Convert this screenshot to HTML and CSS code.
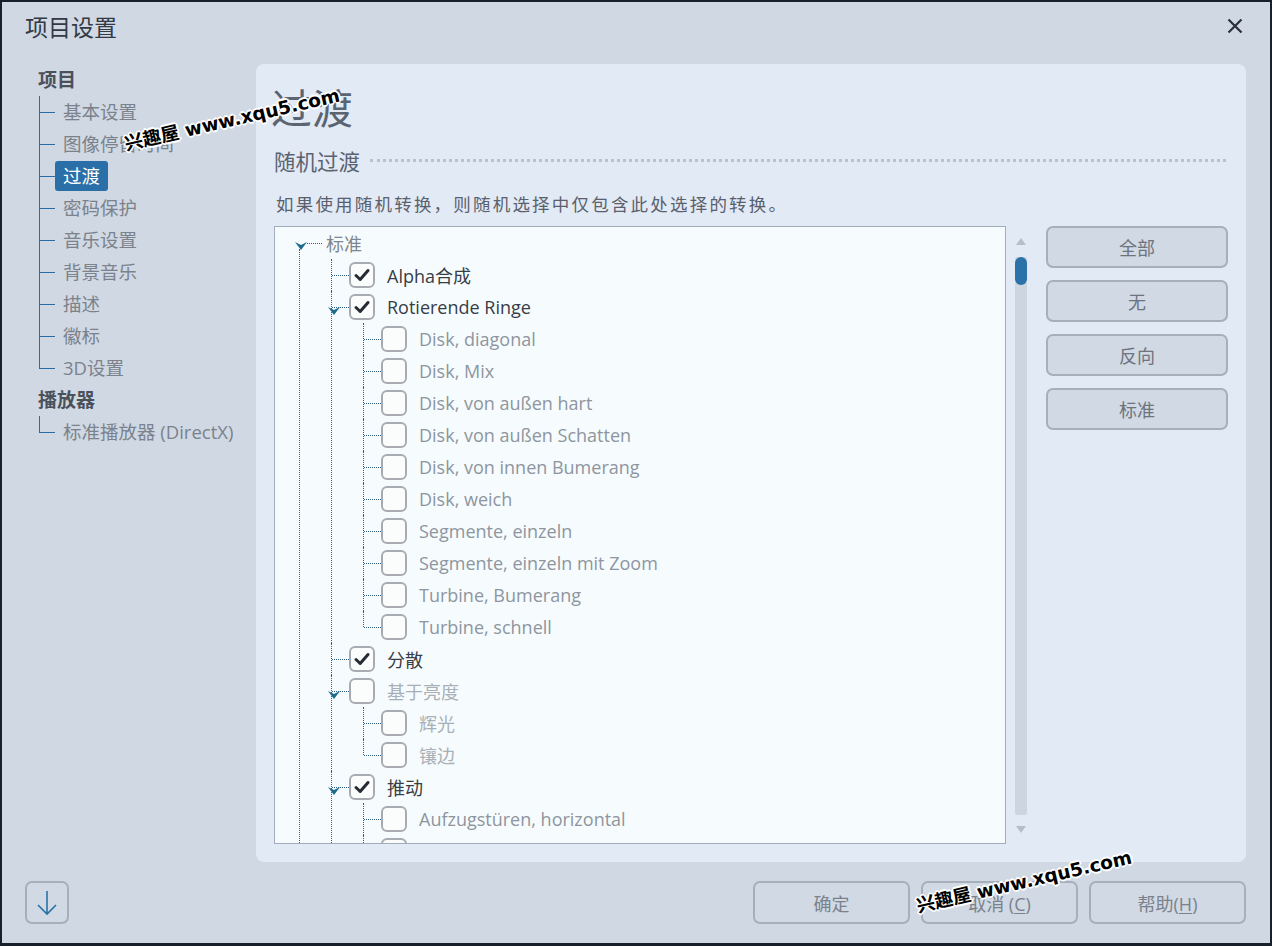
FILE: index.html
```html
<!DOCTYPE html>
<html lang="zh">
<head>
<meta charset="utf-8">
<title>项目设置</title>
<link rel="stylesheet" href="styles.css">
</head>
<body>
<div class="dialog">
  <header class="titlebar">
    <h1 class="title">项目设置</h1>
    <svg class="close" width="16" height="16" viewBox="0 0 16 16"><path d="M1.5 1.5 L14.5 14.5 M14.5 1.5 L1.5 14.5" stroke="#2a303a" stroke-width="2.2" fill="none"/></svg>
  </header>

  <div class="main">
    <nav class="side">
      <div class="grp">项目</div>
      <ul class="navtree">
        <li><span class="nl">基本设置</span></li>
        <li><span class="nl">图像停留时间</span></li>
        <li><span class="nl sel">过渡</span></li>
        <li><span class="nl">密码保护</span></li>
        <li><span class="nl">音乐设置</span></li>
        <li><span class="nl">背景音乐</span></li>
        <li><span class="nl">描述</span></li>
        <li><span class="nl">徽标</span></li>
        <li><span class="nl">3D设置</span></li>
      </ul>
      <div class="grp">播放器</div>
      <ul class="navtree">
        <li><span class="nl">标准播放器 (DirectX)</span></li>
      </ul>
    </nav>

    <section class="panel">
      <h2 class="heading">过渡</h2>
      <div class="section-title"><span>随机过渡</span><span class="dots"></span></div>
      <p class="desc">如果使用随机转换，则随机选择中仅包含此处选择的转换。</p>

      <div class="work">
        <div class="treebox">
          <ul class="tree">
            <li class="root">
              <span class="exp"><svg width="12" height="8" viewBox="0 0 12 8"><path d="M0 0 L6 3 L12 0 L6 8 Z" fill="#1c6a8c"/></svg></span>
              <div class="row"><span class="lbl root-lbl">标准</span></div>
              <ul>
                <li>
                  <div class="row"><span class="cb"><svg width="18" height="18" viewBox="0 0 18 18"><path d="M3 9.5 L7.2 13.5 L15 4.5" stroke="#262b33" stroke-width="3" fill="none" stroke-linecap="round" stroke-linejoin="round"/></svg></span><span class="lbl on">Alpha合成</span></div>
                </li>
                <li>
                  <span class="exp"><svg width="12" height="8" viewBox="0 0 12 8"><path d="M0 0 L6 3 L12 0 L6 8 Z" fill="#1c6a8c"/></svg></span>
                  <div class="row"><span class="cb"><svg width="18" height="18" viewBox="0 0 18 18"><path d="M3 9.5 L7.2 13.5 L15 4.5" stroke="#262b33" stroke-width="3" fill="none" stroke-linecap="round" stroke-linejoin="round"/></svg></span><span class="lbl on">Rotierende Ringe</span></div>
                  <ul>
                    <li><div class="row"><span class="cb"></span><span class="lbl">Disk, diagonal</span></div></li>
                    <li><div class="row"><span class="cb"></span><span class="lbl">Disk, Mix</span></div></li>
                    <li><div class="row"><span class="cb"></span><span class="lbl">Disk, von außen hart</span></div></li>
                    <li><div class="row"><span class="cb"></span><span class="lbl">Disk, von außen Schatten</span></div></li>
                    <li><div class="row"><span class="cb"></span><span class="lbl">Disk, von innen Bumerang</span></div></li>
                    <li><div class="row"><span class="cb"></span><span class="lbl">Disk, weich</span></div></li>
                    <li><div class="row"><span class="cb"></span><span class="lbl">Segmente, einzeln</span></div></li>
                    <li><div class="row"><span class="cb"></span><span class="lbl">Segmente, einzeln mit Zoom</span></div></li>
                    <li><div class="row"><span class="cb"></span><span class="lbl">Turbine, Bumerang</span></div></li>
                    <li><div class="row"><span class="cb"></span><span class="lbl">Turbine, schnell</span></div></li>
                  </ul>
                </li>
                <li>
                  <div class="row"><span class="cb"><svg width="18" height="18" viewBox="0 0 18 18"><path d="M3 9.5 L7.2 13.5 L15 4.5" stroke="#262b33" stroke-width="3" fill="none" stroke-linecap="round" stroke-linejoin="round"/></svg></span><span class="lbl on">分散</span></div>
                </li>
                <li>
                  <span class="exp"><svg width="12" height="8" viewBox="0 0 12 8"><path d="M0 0 L6 3 L12 0 L6 8 Z" fill="#1c6a8c"/></svg></span>
                  <div class="row"><span class="cb"></span><span class="lbl dim">基于亮度</span></div>
                  <ul>
                    <li><div class="row"><span class="cb"></span><span class="lbl dim">辉光</span></div></li>
                    <li><div class="row"><span class="cb"></span><span class="lbl dim">镶边</span></div></li>
                  </ul>
                </li>
                <li class="more">
                  <span class="exp"><svg width="12" height="8" viewBox="0 0 12 8"><path d="M0 0 L6 3 L12 0 L6 8 Z" fill="#1c6a8c"/></svg></span>
                  <div class="row"><span class="cb"><svg width="18" height="18" viewBox="0 0 18 18"><path d="M3 9.5 L7.2 13.5 L15 4.5" stroke="#262b33" stroke-width="3" fill="none" stroke-linecap="round" stroke-linejoin="round"/></svg></span><span class="lbl on">推动</span></div>
                  <ul>
                    <li><div class="row"><span class="cb"></span><span class="lbl">Aufzugstüren, horizontal</span></div></li>
                    <li class="more"><div class="row"><span class="cb"></span><span class="lbl">Aufzugstüren, vertikal</span></div></li>
                  </ul>
                </li>
              </ul>
            </li>
          </ul>
        </div>

        <div class="scroll">
          <div class="arr"><span class="tri-up"></span></div>
          <div class="track"><span class="thumb"></span></div>
          <div class="arr"><span class="tri-down"></span></div>
        </div>

        <div class="side-btns">
          <button class="btn">全部</button>
          <button class="btn">无</button>
          <button class="btn">反向</button>
          <button class="btn">标准</button>
        </div>
      </div>
    </section>
  </div>

  <footer class="footer">
    <button class="iconbtn"><svg width="24" height="28" viewBox="0 0 24 28"><path d="M12 2 V25 M3 16 L12 25 L21 16" stroke="#2a72a8" stroke-width="1.6" fill="none"/></svg></button>
    <div class="actions">
      <button class="fbtn">确定</button>
      <button class="fbtn">取消 (<u>C</u>)</button>
      <button class="fbtn">帮助(<u>H</u>)</button>
    </div>
  </footer>

  <div class="wm wm1">兴趣屋 www.xqu5.com</div>
  <div class="wm wm2">兴趣屋 www.xqu5.com</div>
</div>
</body>
</html>
```

FILE: styles.css
```css
* { box-sizing: border-box; }
html, body { margin: 0; }
body {
  background: #18202c;
  padding: 2px 2px 3px 2px;
  font-family: "Open Sans", "Noto Sans CJK SC", sans-serif;
}
.dialog {
  position: relative;
  width: 1268px;
  height: 941px;
  background: #cfd8e3;
  display: flex;
  flex-direction: column;
  overflow: hidden;
}
.titlebar {
  height: 48px;
  display: flex;
  align-items: center;
  justify-content: space-between;
  padding: 0 27px 0 23px;
}
.title {
  margin: 0;
  font-size: 23px;
  font-weight: normal;
  color: #333a45;
  font-family: "Noto Sans CJK SC", sans-serif;
}
.main {
  display: flex;
  margin-top: 14px;
  height: 798px;
}
.side {
  width: 254px;
  flex: none;
  padding-left: 36px;
  font-family: "Open Sans", "Noto Sans CJK SC", sans-serif;
}
.grp {
  height: 32px;
  line-height: 32px;
  font-size: 19px;
  font-weight: bold;
  color: #4b515b;
}
.navtree { list-style: none; margin: 0; padding: 0; }
.navtree li {
  position: relative;
  height: 32px;
  padding-left: 17px;
  display: flex;
  align-items: center;
}
.navtree li::before {
  content: "";
  position: absolute;
  left: 1px; top: 0; bottom: 0;
  border-left: 1px solid #2b6ca3;
}
.navtree li:last-child::before { bottom: auto; height: 16px; }
.navtree li::after {
  content: "";
  position: absolute;
  left: 1px; top: 16px; width: 16px;
  border-top: 1px solid #2b6ca3;
}
.nl {
  padding: 0 8px;
  height: 30px;
  line-height: 30px;
  border-radius: 3px;
  font-size: 18.5px;
  color: #7b828c;
  white-space: nowrap;
}
.nl.sel { background: #2a6fa7; color: #fff; }

.panel {
  flex: 1;
  margin-right: 24px;
  background: #e2eaf6;
  border-radius: 8px;
  padding: 18px 18px 18px 17px;
  display: flex;
  flex-direction: column;
}
.heading {
  margin: 0 0 0 -2px;
  height: 48px;
  line-height: 48px;
  font-size: 41px;
  font-weight: normal;
  color: #5b6471;
  font-family: "Noto Sans CJK SC", sans-serif;
}
.section-title {
  margin-top: 15px;
  height: 30px;
  display: flex;
  align-items: center;
  font-size: 21.5px;
  color: #5b6370;
  font-family: "Noto Sans CJK SC", sans-serif;
  padding-left: 1px;
}
.dots {
  flex: 1;
  margin-left: 10px;
  margin-right: 2px;
  border-top: 3px dotted #b9c1cb;
}
.desc {
  margin: 17px 0 0 3px;
  height: 24px;
  line-height: 24px;
  font-size: 17.5px;
  letter-spacing: 2.2px;
  color: #5a616c;
  font-family: "Noto Sans CJK SC", sans-serif;
}
.work {
  margin-top: 10px;
  display: flex;
  height: 618px;
}
.treebox {
  width: 732px;
  margin-left: 1px;
  height: 618px;
  border: 1px solid #a3adb9;
  background: #f6fcfd;
  overflow: hidden;
}
.tree, .tree ul { list-style: none; margin: 0; padding: 0; }
.tree li { position: relative; padding-left: 32px; }
.tree li::before {
  content: "";
  position: absolute;
  left: 14px; top: 0; bottom: 0;
  border-left: 1px dotted #2f5f82;
}
.tree li:last-child::before { bottom: auto; height: 16px; }
.tree li.more::before { bottom: 0; height: auto; }
.tree li::after {
  content: "";
  position: absolute;
  left: 15px; top: 16px; width: 17px;
  border-top: 1px dotted #2f5f82;
}
.tree > li.root { padding-left: 42px; }
.tree > li.root::before { left: 24px; top: 22px; bottom: 0; height: auto; }
.tree > li.root::after { left: 32px; width: 15px; }
.row {
  display: flex;
  align-items: center;
  height: 32px;
}
.exp {
  position: absolute;
  left: 11px;
  top: 16px;
  width: 12px;
  height: 8px;
  display: flex;
  z-index: 1;
}
.tree > li.root > .exp { left: 20px; top: 15px; }
.cb {
  width: 26px;
  height: 26px;
  flex: none;
  border: 2px solid #a8acb2;
  border-radius: 6px;
  background: #fbfdfd;
  margin-right: 12px;
  display: flex;
  align-items: center;
  justify-content: center;
}
.lbl {
  font-size: 18px;
  color: #8e959f;
  white-space: nowrap;
}
.lbl.on { color: #383d46; }
.lbl.dim { color: #a9afb6; }
.root-lbl { padding-left: 9px; color: #7f8690; }

.scroll {
  width: 40px;
  flex: none;
  display: flex;
  flex-direction: column;
  align-items: center;
  padding-right: 11px;
}
.arr {
  height: 31px;
  display: flex;
  align-items: center;
  justify-content: center;
  flex: none;
}
.scroll .arr:last-child { height: 29px; }
.tri-up {
  width: 0; height: 0;
  border-left: 5px solid transparent;
  border-right: 5px solid transparent;
  border-bottom: 7px solid #b6bec8;
}
.tri-down {
  width: 0; height: 0;
  border-left: 5px solid transparent;
  border-right: 5px solid transparent;
  border-top: 7px solid #b6bec8;
}
.track {
  flex: 1;
  width: 12px;
  background: #ccd5e0;
  border-radius: 2px;
  display: flex;
  flex-direction: column;
}
.thumb {
  height: 28px;
  border-radius: 6px;
  background: #2a72a8;
}
.side-btns {
  width: 182px;
  flex: none;
  display: flex;
  flex-direction: column;
  gap: 12px;
}
.btn {
  height: 42px;
  background: #d0d9e4;
  border: 2px solid #a6afba;
  border-radius: 7px;
  font-size: 18px;
  color: #6d747e;
  font-family: "Noto Sans CJK SC", sans-serif;
  padding: 0;
}
.footer {
  margin-top: 19px;
  height: 43px;
  display: flex;
  align-items: center;
  justify-content: space-between;
  padding: 0 24px 0 23px;
}
.iconbtn {
  width: 44px;
  height: 43px;
  background: #d0d9e4;
  border: 2px solid #a6afba;
  border-radius: 7px;
  display: flex;
  align-items: center;
  justify-content: center;
  padding: 0;
}
.actions { display: flex; gap: 11px; }
.fbtn {
  width: 157px;
  height: 43px;
  background: #d0d9e4;
  border: 2px solid #a6afba;
  border-radius: 7px;
  font-size: 18px;
  color: #7b828c;
  font-family: "Open Sans", "Noto Sans CJK SC", sans-serif;
  padding: 0;
}
.fbtn u { text-underline-offset: 2px; }

.wm {
  position: absolute;
  width: 220px;
  height: 30px;
  line-height: 30px;
  font-family: "DejaVu Sans", "Noto Sans CJK SC", sans-serif;
  font-weight: bold;
  font-size: 18.5px;
  color: #000;
  white-space: nowrap;
  transform: rotate(-13deg);
  transform-origin: center;
  text-shadow: 1px 1px 0 #fff, -1px -1px 0 #fff, 1px -1px 0 #fff, -1px 1px 0 #fff, 0 2px 0 #fff, 2px 0 0 #fff, 0 -2px 0 #fff, -2px 0 0 #fff;
  z-index: 5;
}
.wm1 { left: 120px; top: 103px; }
.wm2 { left: 912px; top: 865px; }
```
